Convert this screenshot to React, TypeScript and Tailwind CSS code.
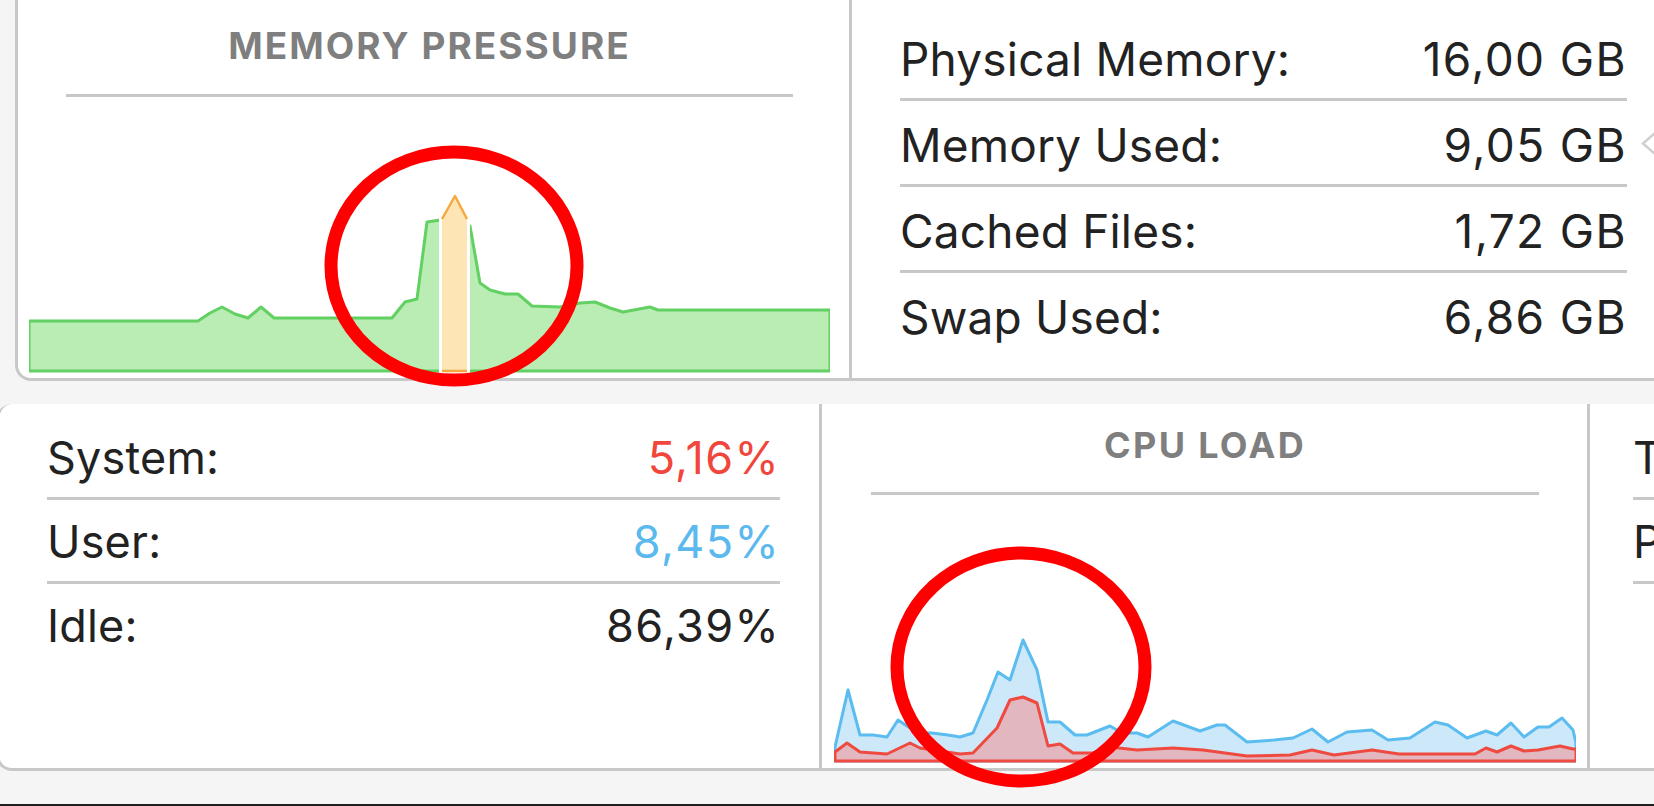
import React from "react";

const GREEN = "29,371 29,321 198,321 210,313 222,307 235,314 248,318 261,307 274,318 392,318 405,302 417,299 427,222 440,220 470,226 480,283 490,290 505,294 518,294 532,306 560,307 580,303 595,302 610,308 623,312 650,307 658,310 830,310 830,371";
const ORANGE = "442,371 442,219 455,196 467,219 467,371";
const ORANGE_TOP = "442,219 455,196 467,219";
const BLUE = "835,761 835,747 848,690 860,735 873,735 887,737 898,720 910,728 920,733 932,733 948,735 960,737 973,733 987,700 998,672 1010,680 1023,640 1037,670 1048,722 1060,722 1075,735 1087,735 1110,726 1122,733 1137,733 1148,737 1173,721 1200,731 1217,725 1225,725 1247,742 1274,740 1293,738 1312,729 1328,742 1347,732 1372,730 1388,740 1410,738 1435,722 1448,725 1467,738 1486,731 1497,735 1511,723 1524,737 1538,727 1549,727 1562,718 1573,730 1576,743 1576,761";
const RED = "835,761 835,752 847,743 860,752 887,754 910,743 920,748 960,754 973,753 997,728 1010,700 1023,697 1037,703 1048,746 1060,744 1073,753 1093,753 1110,747 1137,750 1173,748 1203,750 1247,756 1290,755 1312,750 1334,755 1372,750 1399,754 1475,754 1486,748 1497,752 1511,746 1524,751 1538,750 1560,746 1573,749 1576,749 1576,761";

function Row({ label, value, valueClass = "text-[#222222]", last = false, big = true }: { label: string; value?: string; valueClass?: string; last?: boolean; big?: boolean }) {
  return (
    <div
      className={
        "flex justify-between whitespace-nowrap tracking-[0.012em] " +
        (big ? "pt-[16px] pb-[11px] " : "pt-[15px] pb-[12px] ") +
        (last ? "border-b-[3px] border-transparent" : "border-b-[3px] border-[#c8c8c8]")
      }
    >
      <span className={big ? "text-[46px] leading-[56px]" : "text-[45px] leading-[54px]"}>{label}</span>
      {value && <span className={(big ? "text-[46px] leading-[56px] " : "text-[45px] leading-[54px] ") + "tracking-[0.03em] " + valueClass}>{value}</span>}
    </div>
  );
}

export default function App() {
  return (
    <div className="relative w-[1654px] h-[806px] overflow-hidden bg-[#f5f5f5] flex flex-col font-['Inter','Noto_Sans',sans-serif] text-[#222222]">
      {/* Top card */}
      <div className="h-[381px] ml-[15px] w-[1700px] shrink-0 bg-white border-l-[3px] border-b-[3px] border-[#c8c8c8] rounded-bl-[16px] flex">
        <div className="w-[831px] shrink-0 pl-[11px] pr-[19px] flex flex-col">
          <div className="pt-[27px] text-center text-[37px] leading-[37px] font-bold text-[#7f7f7f] tracking-[0.055em] whitespace-nowrap">MEMORY PRESSURE</div>
          <div className="mt-[30px] h-[3px] mx-[37px] bg-[#c8c8c8]" />
          <svg className="flex-1 w-[801px]" viewBox="29 97 801 281" width={801} height={281}>
            <polygon points={GREEN} fill="#b9edb3" stroke="#63d063" strokeWidth={3} strokeLinejoin="round" />
            <rect x={439} y={210} width={31} height={163} fill="#ffffff" />
            <polygon points={ORANGE} fill="#fde5b6" />
            <polyline points={ORANGE_TOP} fill="none" stroke="#f7a940" strokeWidth={2.5} strokeLinejoin="round" />
            <line x1={442} y1={371} x2={467} y2={371} stroke="#f7a940" strokeWidth={2.5} />
          </svg>
        </div>
        <div className="w-[3px] shrink-0 bg-[#c8c8c8]" />
        <div className="relative shrink-0 pl-[33px] pt-[15px]">
          <div className="w-[757px] pl-[15px] pr-[15px] flex flex-col">
            <Row label="Physical Memory:" value="16,00 GB" />
            <Row label="Memory Used:" value="9,05 GB" />
            <Row label="Cached Files:" value="1,72 GB" />
            <Row label="Swap Used:" value="6,86 GB" last />
          </div>
          <svg className="absolute left-[788px] top-[130px]" width={20} height={28} viewBox="0 0 20 28">
            <polyline points="15,3 3,13.5 15,24" fill="none" stroke="#cfcfcf" strokeWidth={2.5} />
          </svg>
        </div>
      </div>

      {/* Bottom card */}
      <div className="mt-[23px] h-[367px] ml-[-4px] w-[2200px] shrink-0 bg-white border-l-[3px] border-b-[3px] border-[#c8c8c8] rounded-l-[16px] flex">
        <div className="w-[820px] shrink-0 pl-[34px] pt-[12px]">
          <div className="w-[750px] pl-[14px] pr-[3px] flex flex-col">
            <Row big={false} label="System:" value="5,16%" valueClass="text-[#f1463c]" />
            <Row big={false} label="User:" value="8,45%" valueClass="text-[#5bb9ee]" />
            <Row big={false} label="Idle:" value="86,39%" last />
          </div>
        </div>
        <div className="w-[3px] shrink-0 bg-[#c8c8c8]" />
        <div className="w-[765px] shrink-0 pl-[12px] pr-[11px] flex flex-col">
          <div className="pt-[23px] text-center text-[36px] leading-[36px] font-bold text-[#7f7f7f] tracking-[0.065em] whitespace-nowrap">CPU LOAD</div>
          <div className="mt-[29px] h-[3px] mx-[37px] bg-[#c8c8c8]" />
          <svg className="flex-1 w-[742px]" viewBox="834 495 742 273" width={742} height={273}>
            <polygon points={BLUE} fill="#cde9f9" stroke="#5bbcf0" strokeWidth={3} strokeLinejoin="round" />
            <polygon points={RED} fill="#e2b7c0" stroke="#ef4a40" strokeWidth={3} strokeLinejoin="round" />
          </svg>
        </div>
        <div className="w-[3px] shrink-0 bg-[#c8c8c8]" />
        <div className="shrink-0 pl-[37px] pt-[12px]">
          <div className="w-[400px] pl-[6px] flex flex-col">
            <Row big={false} label="Threads:" value="2.345" />
            <Row big={false} label="Processes:" value="512" />
          </div>
        </div>
      </div>

      <div className="mt-auto h-[2px] shrink-0 bg-[#1e1e1e]" />

      {/* Annotation circles */}
      <svg className="absolute left-0 top-0 pointer-events-none" width={1654} height={806} viewBox="0 0 1654 806">
        <ellipse cx={454} cy={266} rx={123} ry={114} fill="none" stroke="#ff0000" strokeWidth={13} />
        <ellipse cx={1021} cy={667} rx={124} ry={114} fill="none" stroke="#ff0000" strokeWidth={13} />
      </svg>
    </div>
  );
}
